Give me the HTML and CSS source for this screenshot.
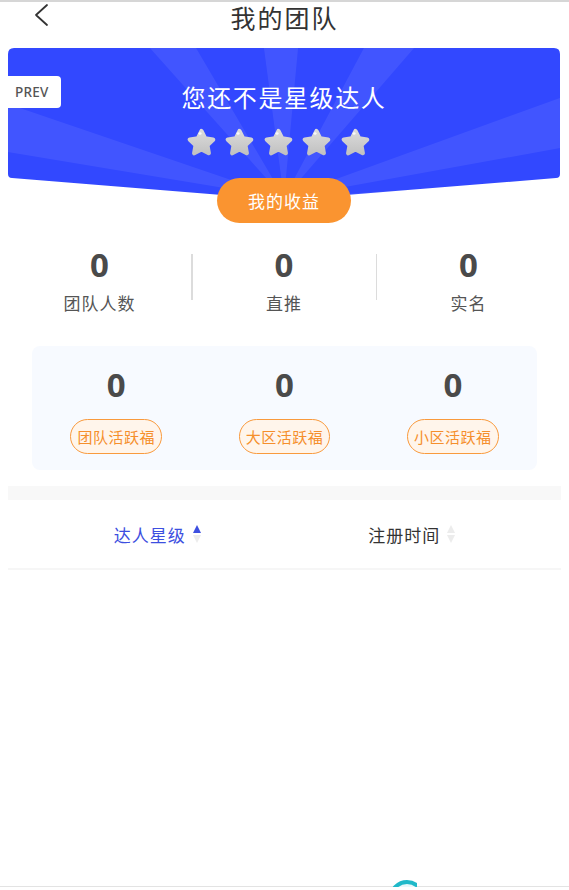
FILE: index.html
```html
<!DOCTYPE html>
<html lang="zh-CN">
<head>
<meta charset="utf-8">
<title>我的团队</title>
<link rel="stylesheet" href="styles.css">
</head>
<body>
<div class="page">
  <header class="header">
    <svg class="back" width="16" height="24" viewBox="0 0 16 24"><path d="M14 2 L3 12 L14 22" fill="none" stroke="#333" stroke-width="1.8" stroke-linecap="round" stroke-linejoin="round"/></svg>
    <h1 class="title">我的团队</h1>
  </header>

  <section class="banner">
    <svg class="banner-bg" width="552" height="152" viewBox="0 0 552 152" preserveAspectRatio="none">
      <defs>
        <clipPath id="bshape">
          <path d="M0 6 Q0 0 6 0 H546 Q552 0 552 6 V126 Q552 130 548 130 L276 152 L4 130 Q0 130 0 126 Z"/>
        </clipPath>
      </defs>
      <g clip-path="url(#bshape)">
        <rect width="552" height="152" fill="#3349FF"/>
        <g fill="#ffffff" opacity="0.07">
          <polygon points="276,150 142,0 188,0"/>
          <polygon points="276,150 256,0 290,0"/>
          <polygon points="276,150 356,0 406,0"/>
          <polygon points="276,150 0,56 0,104"/>
          <polygon points="276,150 552,50 552,100"/>
          <polygon points="276,150 0,150 0,138"/>
          <polygon points="276,150 552,132 552,150"/>
        </g>
      </g>
    </svg>
    <div class="prev">PREV</div>
    <div class="banner-title">您还不是星级达人</div>
    <div class="stars">
      <svg class="star" viewBox="0 0 24 24"><use href="#starshape"/></svg>
      <svg class="star" viewBox="0 0 24 24"><use href="#starshape"/></svg>
      <svg class="star" viewBox="0 0 24 24"><use href="#starshape"/></svg>
      <svg class="star" viewBox="0 0 24 24"><use href="#starshape"/></svg>
      <svg class="star" viewBox="0 0 24 24"><use href="#starshape"/></svg>
    </div>
    <button class="earn">我的收益</button>
  </section>

  <svg class="defs" width="0" height="0">
    <defs>
      <linearGradient id="sg" x1="0" y1="0" x2="0" y2="1">
        <stop offset="0" stop-color="#dadada"/>
        <stop offset="1" stop-color="#c2c2c2"/>
      </linearGradient>
      <g id="starshape">
        <polygon points="12,2.6 15,8.6 21.6,9.6 16.8,14.2 18,20.8 12,17.7 6,20.8 7.2,14.2 2.4,9.6 9,8.6" fill="url(#sg)" stroke="url(#sg)" stroke-width="3.6" stroke-linejoin="round"/>
        <ellipse cx="10.8" cy="4.6" rx="1.3" ry="1" fill="#ffffff" opacity="0.85"/>
      </g>
    </defs>
  </svg>

  <section class="stats">
    <div class="stat">
      <div class="num">0</div>
      <div class="label">团队人数</div>
    </div>
    <div class="divider"></div>
    <div class="stat">
      <div class="num">0</div>
      <div class="label">直推</div>
    </div>
    <div class="divider"></div>
    <div class="stat">
      <div class="num">0</div>
      <div class="label">实名</div>
    </div>
  </section>

  <section class="card">
    <div class="cell">
      <div class="num">0</div>
      <div class="badge">团队活跃福</div>
    </div>
    <div class="cell">
      <div class="num">0</div>
      <div class="badge">大区活跃福</div>
    </div>
    <div class="cell">
      <div class="num">0</div>
      <div class="badge">小区活跃福</div>
    </div>
  </section>

  <div class="strip"></div>

  <nav class="tabs">
    <div class="tab active">
      <span>达人星级</span>
      <svg class="sort" width="8" height="18" viewBox="0 0 8 18"><polygon points="4,0 8,8 0,8" fill="#3D4FE0"/><polygon points="0,10 8,10 4,18" fill="#ececec"/></svg>
    </div>
    <div class="tab">
      <span>注册时间</span>
      <svg class="sort" width="8" height="18" viewBox="0 0 8 18"><polygon points="4,0 8,8 0,8" fill="#ececec"/><polygon points="0,10 8,10 4,18" fill="#ececec"/></svg>
    </div>
  </nav>

  <footer class="footer">
    <div class="fab"></div>
  </footer>
</div>
</body>
</html>
```

FILE: styles.css
```css
* { box-sizing: border-box; }
html, body { margin: 0; padding: 0; background: #fff; }
body {
  font-family: "Noto Sans CJK SC", "Noto Sans", sans-serif;
  color: #333;
}
.page {
  min-height: 890px;
  display: flex;
  flex-direction: column;
}
.header {
  border-top: 2px solid #d6d6d6;
  height: 32px;
  display: flex;
  align-items: center;
  justify-content: center;
  position: relative;
}
.back {
  position: absolute;
  left: 33px;
  top: 1px;
}
.title {
  margin: 0;
  font-size: 25px;
  font-weight: 400;
  line-height: 30px;
  letter-spacing: 2px;
  color: #333;
}
.banner {
  position: relative;
  margin: 16px 9px 0 8px;
  height: 176px;
  display: flex;
  flex-direction: column;
  align-items: center;
  padding-top: 33px;
}
.banner-bg {
  position: absolute;
  left: 0;
  top: 0;
  width: 100%;
  height: 152px;
}
.defs { position: absolute; }
.prev {
  position: absolute;
  left: 0;
  top: 28px;
  width: 53px;
  height: 32px;
  background: #fff;
  border-radius: 0 4px 4px 0;
  font-family: "Noto Sans", sans-serif;
  font-size: 13.5px;
  font-weight: 500;
  color: #555;
  display: flex;
  align-items: center;
  padding-left: 7px;
  letter-spacing: 0.2px;
}
.banner-title {
  position: relative;
  color: #fff;
  font-size: 24px;
  line-height: 32px;
  letter-spacing: 1.6px;
}
.stars {
  position: relative;
  display: flex;
  gap: 9.5px;
  margin-top: 15px;
  margin-left: -12px;
}
.star { width: 29px; height: 29px; display: block; }
.earn {
  position: relative;
  margin-top: 21px;
  width: 134px;
  height: 45px;
  border: none;
  border-radius: 23px;
  background: #FA9430;
  color: #fff;
  font-family: "Noto Sans CJK SC", sans-serif;
  font-size: 17px;
  letter-spacing: 1px;
  padding: 0;
}
.stats {
  display: flex;
  margin: 22px 9px 0 8px;
}
.stat {
  flex: 1;
  display: flex;
  flex-direction: column;
  align-items: center;
}
.num {
  font-family: "Noto Sans", "Noto Sans CJK SC", sans-serif;
  font-weight: 700;
  font-size: 33px;
  line-height: 38px;
  color: #4a4a4a;
}
.label {
  margin-top: 7px;
  font-size: 17px;
  line-height: 24px;
  letter-spacing: 1px;
  color: #555;
}
.divider {
  width: 1.5px;
  height: 46px;
  margin-top: 8px;
  background: #dcdcdc;
}
.card {
  margin: 31px 32px 0 32px;
  background: #F7FAFF;
  border-radius: 8px;
  display: flex;
  padding: 20px 0 16px;
}
.cell {
  flex: 1;
  display: flex;
  flex-direction: column;
  align-items: center;
}
.badge {
  margin-top: 15px;
  height: 35px;
  padding: 0 6px;
  border: 1.5px solid #F99A3D;
  border-radius: 18px;
  background: #FFF5EB;
  color: #F58F2C;
  font-size: 15px;
  letter-spacing: 0.5px;
  display: flex;
  align-items: center;
}
.strip {
  margin: 16px 8px 0 8px;
  height: 14px;
  background: #F8F8F8;
}
.tabs {
  margin: 0 8px;
  height: 70px;
  border-bottom: 2px solid #f6f6f6;
  display: grid;
  grid-template-columns: 1fr 1fr;
  padding: 0 22px;
}
.tab {
  display: flex;
  align-items: center;
  justify-content: center;
  gap: 7px;
  font-size: 17px;
  letter-spacing: 1px;
  color: #333;
}
.tab.active { color: #3D4FE0; }
.sort { display: block; }
.footer {
  margin-top: auto;
  height: 4px;
  border-top: 1px solid #e3e3e3;
  position: relative;
}
.fab {
  position: absolute;
  left: 389px;
  top: -7px;
  width: 28px;
  height: 7px;
  overflow: hidden;
}
.fab::before {
  content: "";
  display: block;
  width: 28px;
  height: 28px;
  border-radius: 50%;
  border: 4px solid #20B9C9;
  background: #e8f8fa;
}
```
